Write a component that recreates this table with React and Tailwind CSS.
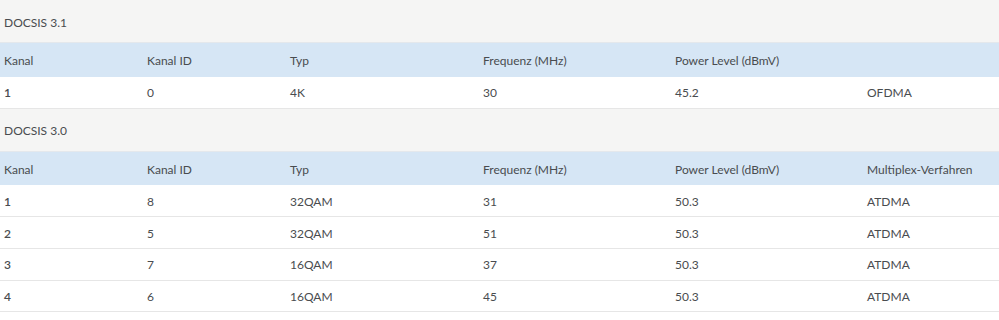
import React from 'react';

const cols = ['w-[143px]', 'w-[143px]', 'w-[193px]', 'w-[192px]', 'w-[192px]', ''];

const sections = [
  {
    title: 'DOCSIS 3.1',
    head: ['Kanal', 'Kanal ID', 'Typ', 'Frequenz (MHz)', 'Power Level (dBmV)', ''],
    rows: [['1', '0', '4K', '30', '45.2', 'OFDMA']],
  },
  {
    title: 'DOCSIS 3.0',
    head: ['Kanal', 'Kanal ID', 'Typ', 'Frequenz (MHz)', 'Power Level (dBmV)', 'Multiplex-Verfahren'],
    rows: [
      ['1', '8', '32QAM', '31', '50.3', 'ATDMA'],
      ['2', '5', '32QAM', '51', '50.3', 'ATDMA'],
      ['3', '7', '16QAM', '37', '50.3', 'ATDMA'],
      ['4', '6', '16QAM', '45', '50.3', 'ATDMA'],
      ['', '', '', '', '', ''],
    ],
  },
];

const Section = ({ title, head, rows }) => (
  <div>
    <div className="h-[42px] flex items-center px-1 pt-[3px]">{title}</div>
    <table className="w-full table-fixed border-collapse">
      <colgroup>
        {cols.map((c, i) => (
          <col key={i} className={c} />
        ))}
      </colgroup>
      <thead>
        <tr className="bg-[#d6e6f5] h-[34px] border-t border-[#e4e8ec]">
          {head.map((h, i) => (
            <th key={i} className="text-left font-normal px-1 pt-[3px]">{h}</th>
          ))}
        </tr>
      </thead>
      <tbody>
        {rows.map((r, i) => (
          <tr key={i} className="bg-white h-[31.67px] border-b border-[#e6e6e6]">
            {r.map((c, j) => (
              <td key={j} className={`px-1 pt-[2px] ${j === 0 ? 'font-semibold' : ''}`}>{c}</td>
            ))}
          </tr>
        ))}
      </tbody>
    </table>
  </div>
);

export default function App() {
  return (
    <div className="w-[999px] h-[320px] overflow-hidden bg-[#f5f5f4] text-[#494c4f] text-[12px] font-['Lato',sans-serif]">
      {sections.map((s) => (
        <Section key={s.title} {...s} />
      ))}
    </div>
  );
}
